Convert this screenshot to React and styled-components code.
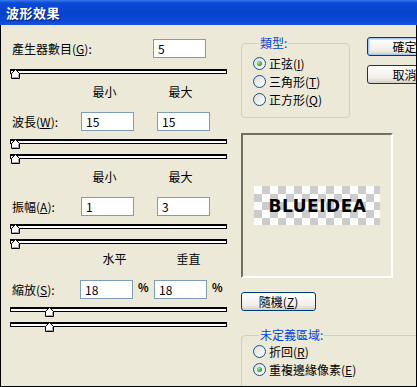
import React from 'react';
import styled, { createGlobalStyle } from 'styled-components';

const GlobalStyle = createGlobalStyle`
  html, body {
    margin: 0;
    padding: 0;
    background: #ece9d8;
  }
  body {
    font-family: "Noto Sans CJK TC", "Noto Sans", sans-serif;
    font-size: 12px;
    color: #000;
  }
`;

const Window = styled.div`
  width: 417px;
  height: 387px;
  display: flex;
  flex-direction: column;
  overflow: hidden;
  background: #ece9d8;
`;

const TitleBar = styled.div`
  flex: none;
  height: 25px;
  display: flex;
  align-items: center;
  padding-left: 6px;
  color: #fff;
  font-size: 13px;
  font-weight: bold;
  letter-spacing: 0.5px;
  text-shadow: 1px 1px 0 #0a1e6e;
  background: linear-gradient(#3a78ec 0%, #0b4ad8 12%, #0843cc 50%, #0a48d6 85%, #1756e0 100%);
`;

const Body = styled.div`
  flex: 1;
  display: flex;
  overflow: hidden;
  border: 1px solid #000;
  border-top: none;
`;

const LeftCol = styled.div`
  flex: none;
  width: 218px;
  margin-left: 9px;
  padding-top: 14px;
  display: flex;
  flex-direction: column;

  & > * {
    flex: none;
  }
`;

const Row = styled.div`
  display: flex;
  align-items: center;
  height: 19px;
  margin-top: ${p => p.$mt || 0}px;
`;

const Label = styled.div`
  width: ${p => p.$w}px;
  padding-left: 2px;
  box-sizing: border-box;
  white-space: nowrap;
`;

const Field = styled.div`
  width: 53px;
  height: 19px;
  box-sizing: border-box;
  border: 1px solid #7f9db9;
  background: #fff;
  padding-left: 4px;
  line-height: 17px;
  margin-left: ${p => p.$ml || 0}px;
`;

const Percent = styled.div`
  width: ${p => p.$w}px;
  padding-left: 5px;
  box-sizing: border-box;
  font-size: 11px;
  font-weight: bold;
  align-self: flex-start;
  line-height: 14px;
`;

const HeaderRow = styled.div`
  display: flex;
  gap: ${p => p.$gap}px;
  padding-left: ${p => p.$pl}px;
  margin-top: ${p => p.$mt}px;
  height: 14px;
  line-height: 14px;
`;

const HeaderCell = styled.div`
  width: 53px;
  text-align: center;
`;

const Slider = styled.div`
  position: relative;
  width: 217px;
  height: 10px;
  margin-top: ${p => p.$mt}px;
`;

const Track = styled.div`
  height: 5px;
  box-sizing: border-box;
  border: 1px solid #000;
  border-top-width: 2px;
  background: #fff;
`;

const Thumb = styled.svg`
  position: absolute;
  top: 0;
`;

const RightCol = styled.div`
  flex: none;
  width: 220px;
  margin-left: 13px;
  padding-top: 11px;
  display: flex;
  flex-direction: column;

  & > * {
    flex: none;
  }
`;

const TopRow = styled.div`
  display: flex;
  align-items: flex-start;
`;

const Group = styled.fieldset`
  box-sizing: border-box;
  width: ${p => p.$w}px;
  height: ${p => p.$h}px;
  margin: ${p => p.$mt || 0}px 0 0 0;
  padding: ${p => p.$pt}px 0 0 11px;
  border: 1px solid #d0d0bf;
  border-radius: 4px;
  min-width: 0;
`;

const Legend = styled.legend`
  color: #0046d5;
  padding: 0 1px;
  margin-left: 6px;
  line-height: 14px;
`;

const RadioRow = styled.div`
  display: flex;
  align-items: center;
  height: 18px;
  white-space: nowrap;
`;

const RadioCircle = styled.span`
  width: 13px;
  height: 13px;
  box-sizing: border-box;
  border-radius: 50%;
  border: 1px solid #1c5180;
  background: linear-gradient(135deg, #dcdcd7, #ffffff);
  margin-right: 3px;
  display: flex;
  align-items: center;
  justify-content: center;

  &::after {
    content: '';
    display: ${p => (p.$on ? 'block' : 'none')};
    width: 5px;
    height: 5px;
    border-radius: 50%;
    background: radial-gradient(circle at 35% 35%, #a4e8a4, #21a121 70%);
  }
`;

const ButtonStack = styled.div`
  display: flex;
  flex-direction: column;
  gap: 9px;
  margin-left: 17px;
  margin-top: 1px;
`;

const Button = styled.div`
  width: 75px;
  height: 19px;
  box-sizing: border-box;
  border: 1px solid #003c74;
  border-radius: 3px;
  background: linear-gradient(#ffffff, #f0efe9 70%, #d6d0c5);
  box-shadow: ${p => (p.$default ? 'inset 0 0 0 1px #a8c4f0, inset 1px 1px 0 1px #cee0fb' : 'none')};
  display: flex;
  align-items: center;
  justify-content: center;
  margin-top: ${p => p.$mt || 0}px;
  line-height: 1;
`;

const Preview = styled.div`
  margin-top: 15px;
  width: 152px;
  height: 145px;
  box-sizing: border-box;
  border: 2px solid;
  border-color: #716f64 #fff #fff #716f64;
  display: flex;
  align-items: center;
  justify-content: center;
`;

const Checker = styled.div`
  width: 126px;
  height: 39px;
  background: repeating-conic-gradient(#cccccc 0 25%, #ffffff 0 50%) 0 0 / 16px 16px;
  display: flex;
  align-items: center;
  justify-content: center;
  font-family: "DejaVu Sans", sans-serif;
  font-weight: bold;
  font-size: 17px;
  letter-spacing: 0.5px;
  padding-left: 1px;
  box-sizing: border-box;
`;

function Key({ children }) {
  return <>(<u>{children}</u>)</>;
}

function TrackBar({ mt, pos }) {
  return (
    <Slider $mt={mt}>
      <Track />
      <Thumb width="10" height="10" viewBox="0 0 10 10" style={{ left: pos }}>
        <polygon points="0.5,9.5 0.5,4.5 4.5,0.5 8.5,4.5 8.5,9.5" fill="#fff" stroke="#000" />
        <polyline points="7.5,5 7.5,8.5 1.5,8.5" fill="none" stroke="#a0a0a0" />
      </Thumb>
    </Slider>
  );
}

function Radio({ on, children }) {
  return (
    <RadioRow>
      <RadioCircle $on={on} />
      {children}
    </RadioRow>
  );
}

export default function App() {
  return (
    <Window>
      <GlobalStyle />
      <TitleBar>波形效果</TitleBar>
      <Body>
        <LeftCol>
          <Row>
            <Label $w={143}>產生器數目<Key>G</Key>:</Label>
            <Field>5</Field>
          </Row>
          <TrackBar mt={11} pos={1} />

          <HeaderRow $pl={68} $gap={23} $mt={6}>
            <HeaderCell>最小</HeaderCell>
            <HeaderCell>最大</HeaderCell>
          </HeaderRow>
          <Row $mt={13}>
            <Label $w={71}>波長<Key>W</Key>:</Label>
            <Field>15</Field>
            <Field $ml={23}>15</Field>
          </Row>
          <TrackBar mt={8} pos={1} />
          <TrackBar mt={5} pos={1} />

          <HeaderRow $pl={68} $gap={23} $mt={6}>
            <HeaderCell>最小</HeaderCell>
            <HeaderCell>最大</HeaderCell>
          </HeaderRow>
          <Row $mt={13}>
            <Label $w={71}>振幅<Key>A</Key>:</Label>
            <Field>1</Field>
            <Field $ml={23}>3</Field>
          </Row>
          <TrackBar mt={8} pos={1} />
          <TrackBar mt={5} pos={1} />

          <HeaderRow $pl={78} $gap={21} $mt={3}>
            <HeaderCell>水平</HeaderCell>
            <HeaderCell>垂直</HeaderCell>
          </HeaderRow>
          <Row $mt={14}>
            <Label $w={70}>縮放<Key>S</Key>:</Label>
            <Field>18</Field>
            <Percent $w={21}>%</Percent>
            <Field>18</Field>
            <Percent $w={20}>%</Percent>
          </Row>
          <TrackBar mt={8} pos={35} />
          <TrackBar mt={5} pos={35} />
        </LeftCol>

        <RightCol>
          <TopRow>
            <Group $w={109} $h={82} $pt={4}>
              <Legend>類型:</Legend>
              <Radio on>正弦<Key>I</Key></Radio>
              <Radio>三角形<Key>T</Key></Radio>
              <Radio>正方形<Key>Q</Key></Radio>
            </Group>
            <ButtonStack>
              <Button $default>確定</Button>
              <Button>取消</Button>
            </ButtonStack>
          </TopRow>

          <Preview>
            <Checker>BLUEIDEA</Checker>
          </Preview>

          <Button $mt={14}>隨機<Key>Z</Key></Button>

          <Group $w={220} $h={90} $pt={0} $mt={17}>
            <Legend>未定義區域:</Legend>
            <Radio>折回<Key>R</Key></Radio>
            <Radio on>重複邊緣像素<Key>E</Key></Radio>
          </Group>
        </RightCol>
      </Body>
    </Window>
  );
}
